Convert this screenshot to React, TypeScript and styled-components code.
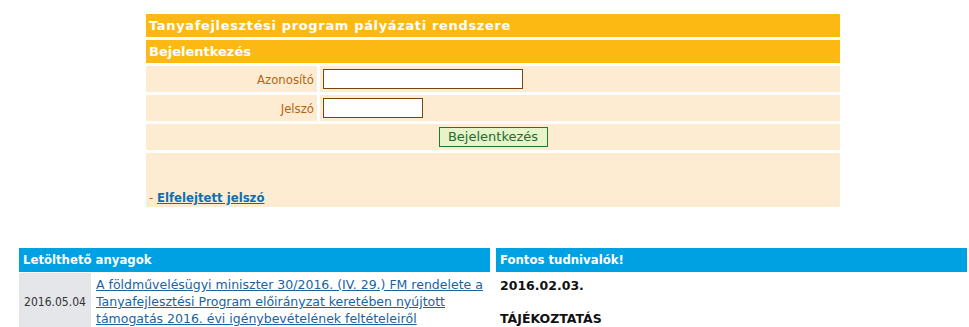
import React from "react";
import styled, { createGlobalStyle } from "styled-components";

const GlobalStyle = createGlobalStyle`
  body {
    margin: 0;
    background: #ffffff;
    font-family: "DejaVu Sans Condensed", "DejaVu Sans", Verdana, sans-serif;
    font-size: 12px;
    color: #222;
  }
`;

export default function App() {
  return (
    <>
      <GlobalStyle />
      <Page>
        <LoginBox>
          <HeadCell $spread>Tanyafejlesztési program pályázati rendszere</HeadCell>
          <HeadCell>Bejelentkezés</HeadCell>
          <LabelCell>Azonosító</LabelCell>
          <FieldCell>
            <TextInput $width={200} type="text" />
          </FieldCell>
          <LabelCell>Jelszó</LabelCell>
          <FieldCell>
            <TextInput $width={100} type="password" />
          </FieldCell>
          <ButtonCell>
            <LoginButton type="button">Bejelentkezés</LoginButton>
          </ButtonCell>
          <ForgotCell>
            <Dash>-</Dash> <ForgotLink href="#">Elfelejtett jelszó</ForgotLink>
          </ForgotCell>
        </LoginBox>

        <Panels>
          <Panel>
            <PanelHead>Letölthető anyagok</PanelHead>
            <DocRow>
              <DateCell>2016.05.04</DateCell>
              <DocCell>
                <DocLink href="#">
                  A földművelésügyi miniszter 30/2016. (IV. 29.) FM rendelete a
                  Tanyafejlesztési Program előirányzat keretében nyújtott
                  támogatás 2016. évi igénybevételének feltételeiről
                </DocLink>
              </DocCell>
            </DocRow>
          </Panel>
          <Panel>
            <PanelHead>Fontos tudnivalók!</PanelHead>
            <NewsBody>
              <NewsTitle>2016.02.03.</NewsTitle>
              <NewsTitle>TÁJÉKOZTATÁS</NewsTitle>
            </NewsBody>
          </Panel>
        </Panels>
      </Page>
    </>
  );
}

const Page = styled.div`
  width: 986px;
  padding-top: 11px;
`;

const LoginBox = styled.div`
  width: 700px;
  margin-left: 143px;
  box-sizing: border-box;
  padding: 3px;
  display: grid;
  grid-template-columns: 171px 1fr;
  gap: 3px;
`;

const HeadCell = styled.div<{ $spread?: boolean }>`
  grid-column: 1 / -1;
  height: 23px;
  background: #fdb913;
  color: #ffffff;
  font-family: "DejaVu Sans", Verdana, sans-serif;
  font-weight: bold;
  font-size: 13px;
  line-height: 23px;
  padding-left: 3px;
  letter-spacing: ${(p) => (p.$spread ? "0.65px" : "0")};
`;

const LabelCell = styled.div`
  height: 26px;
  background: #feecd2;
  color: #b5640f;
  font-size: 13px;
  display: flex;
  align-items: center;
  justify-content: flex-end;
  padding-right: 3px;
`;

const FieldCell = styled.div`
  height: 26px;
  background: #feecd2;
  display: flex;
  align-items: center;
  padding-left: 3px;
`;

const TextInput = styled.input<{ $width: number }>`
  width: ${(p) => p.$width}px;
  height: 20px;
  box-sizing: border-box;
  border: 1px solid #7a4508;
  background: #fff;
  margin: 0;
  padding: 0 2px;
`;

const ButtonCell = styled.div`
  grid-column: 1 / -1;
  height: 26px;
  background: #feecd2;
  display: flex;
  align-items: center;
  justify-content: center;
`;

const LoginButton = styled.button`
  width: 109px;
  height: 20px;
  box-sizing: border-box;
  border: 1px solid #1d7a32;
  background: #e7f3c8;
  color: #1f6b32;
  font-family: "DejaVu Sans", Verdana, sans-serif;
  font-size: 13px;
  padding: 0;
  margin: 0;
  line-height: 18px;
`;

const ForgotCell = styled.div`
  grid-column: 1 / -1;
  height: 54px;
  box-sizing: border-box;
  background: #feecd2;
  padding: 36px 3px 0;
  font-size: 13px;
  line-height: 17px;
`;

const Dash = styled.span`
  color: #b5640f;
`;

const ForgotLink = styled.a`
  color: #0f6fae;
  font-weight: bold;
  text-decoration: underline;
`;

const Panels = styled.div`
  display: flex;
  gap: 6px;
  margin-left: 19px;
  margin-top: 38px;
`;

const Panel = styled.div`
  width: 471px;
  flex-shrink: 0;
`;

const PanelHead = styled.div`
  height: 24px;
  background: #00a1e2;
  color: #ffffff;
  font-weight: bold;
  font-size: 13px;
  line-height: 24px;
  padding-left: 4px;
`;

const DocRow = styled.div`
  display: flex;
  margin-top: 1px;
`;

const DateCell = styled.div`
  width: 72px;
  flex-shrink: 0;
  background: #e4e6e9;
  color: #333;
  display: flex;
  align-items: center;
  justify-content: center;
  font-size: 12px;
`;

const DocCell = styled.div`
  flex: 1;
  padding: 3px 4px 3px 5px;
  line-height: 17px;
  font-family: "DejaVu Sans", Verdana, sans-serif;
  font-size: 12.5px;
`;

const DocLink = styled.a`
  color: #1a62a0;
  text-decoration: underline;
`;

const NewsBody = styled.div`
  padding: 5px 4px;
`;

const NewsTitle = styled.div`
  font-family: "DejaVu Sans", Verdana, sans-serif;
  font-weight: bold;
  font-size: 12.5px;
  color: #111;
  line-height: 17px;
  margin-bottom: 16px;
`;
